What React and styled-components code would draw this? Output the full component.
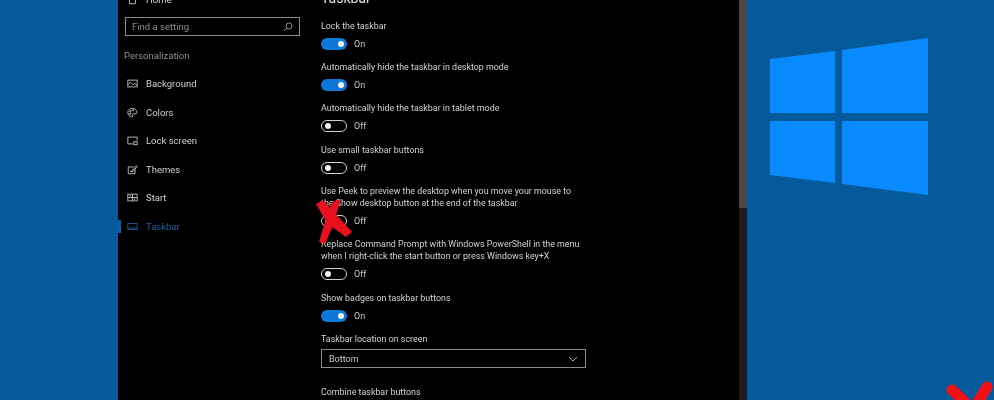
import styled, { createGlobalStyle } from "styled-components";
import { Fragment } from "react";

const GlobalStyle = createGlobalStyle`
  html, body {
    margin: 0;
    padding: 0;
    background: #045a9b;
    overflow: hidden;
  }
`;

const Desktop = styled.div`
  position: relative;
  display: flex;
  width: 994px;
  height: 400px;
  overflow: hidden;
  background: #045a9b;
  padding-left: 118px;
  box-sizing: border-box;
  font-family: Roboto, "Liberation Sans", sans-serif;
`;

const SettingsWindow = styled.div`
  display: flex;
  width: 629px;
  height: 400px;
  background: #000;
  overflow: hidden;
`;

const Sidebar = styled.nav`
  width: 203px;
  flex-shrink: 0;
  margin-top: -9px;
  filter: blur(0.35px);
`;

const HomeRow = styled.div`
  display: flex;
  align-items: center;
  gap: 8px;
  height: 17px;
  padding-left: 9px;
  font-size: 9.5px;
  color: #d8d8d8;
`;

const SearchBox = styled.div`
  display: flex;
  align-items: center;
  justify-content: space-between;
  box-sizing: border-box;
  width: 175px;
  height: 19px;
  margin: 9px 0 0 7px;
  padding: 0 6px;
  border: 1px solid #8a8a8a;
  font-size: 9.5px;
  color: #8c8c8c;
`;

const SectionTitle = styled.div`
  margin: 12px 0 0 6px;
  height: 15px;
  line-height: 15px;
  font-size: 9.5px;
  color: #8f8f8f;
`;

const NavList = styled.div`
  margin-top: 6.5px;
`;

const NavItem = styled.div`
  position: relative;
  display: flex;
  align-items: center;
  gap: 8px;
  height: 28.5px;
  padding-left: 9px;
  font-size: 9.5px;
  color: ${(p) => (p.$active ? "#1f5f9e" : "#cfcfcf")};
  &::before {
    content: "";
    display: ${(p) => (p.$active ? "block" : "none")};
    position: absolute;
    left: 0;
    top: 8px;
    width: 3px;
    height: 13px;
    background: #0a5fb0;
  }
`;

const NavIcon = styled.svg`
  width: 11px;
  height: 11px;
  flex-shrink: 0;
  fill: none;
  stroke: currentColor;
  stroke-width: 1;
`;

const Content = styled.main`
  flex: 1;
  margin-top: -11px;
  color: #d6d6d6;
  font-size: 8.9px;
  filter: blur(0.35px);
`;

const PageTitle = styled.h1`
  margin: 0;
  height: 30.5px;
  line-height: 18px;
  font-size: 14px;
  font-weight: 400;
  color: #e4e4e4;
`;

const Setting = styled.section`
  margin-bottom: ${(p) => p.$gap ?? 10.4}px;
`;

const Label = styled.div`
  line-height: 12px;
  font-size: 8.9px;
  color: #d2d2d2;
  white-space: nowrap;
`;

const ToggleRow = styled.div`
  display: flex;
  align-items: center;
  gap: 7px;
  height: 14px;
  margin-top: 5px;
  font-size: 9px;
  color: #c8c8c8;
`;

const Track = styled.span`
  display: flex;
  align-items: center;
  justify-content: ${(p) => (p.$on ? "flex-end" : "flex-start")};
  box-sizing: border-box;
  width: 26px;
  height: 12px;
  padding: 0 3px;
  border-radius: 6px;
  border: ${(p) => (p.$on ? "none" : "1.5px solid #d0d0d0")};
  background: ${(p) => (p.$on ? "#0d78d8" : "transparent")};
`;

const Knob = styled.span`
  width: 6px;
  height: 6px;
  border-radius: 50%;
  background: #f2f2f2;
`;

const Select = styled.div`
  display: flex;
  align-items: center;
  justify-content: space-between;
  box-sizing: border-box;
  width: 265px;
  height: 19px;
  margin-top: 4px;
  padding: 0 7px;
  border: 1px solid #8a8a8a;
  font-size: 9px;
  color: #cccccc;
`;

const ScrollTrack = styled.div`
  width: 8px;
  flex-shrink: 0;
  height: 400px;
  background: #1c1c1c;
`;

const ScrollThumb = styled.div`
  height: 208px;
  background: #4a4a48;
`;

const LogoArea = styled.div`
  flex: 1;
  display: flex;
  align-items: flex-start;
  padding: 38px 0 0 23px;
`;

const RedMark = styled.svg`
  position: absolute;
  left: 0;
  top: 0;
  pointer-events: none;
`;

const navItems = [
  {
    name: "Background",
    icon: (
      <>
        <rect x="1" y="2.500" width="11" height="8" />
        <path d="M1 8l3-3 3 3 2-1.500 3 2" />
      </>
    ),
  },
  {
    name: "Colors",
    icon: (
      <>
        <path d="M6.500 1.500a5 5 0 0 0-1 10c1.500.3 1.300-1.500 1-2.300-.3-1 .8-1.500 2-1.200 2 .5 3.500-.5 3-2.500-.5-2.500-2.500-4-5-4z" />
        <circle cx="4" cy="5" r=".8" />
        <circle cx="7" cy="3.800" r=".8" />
        <circle cx="3.800" cy="8" r=".8" />
      </>
    ),
  },
  {
    name: "Lock screen",
    icon: (
      <>
        <path d="M7 10.500H1v-8h11v4" />
        <rect x="8" y="8" width="4" height="3.500" />
      </>
    ),
  },
  {
    name: "Themes",
    icon: (
      <>
        <path d="M8 3.500H1.500v8h8V6" />
        <path d="M4 9l2-1 5-6 1 1-5 6z" />
      </>
    ),
  },
  {
    name: "Start",
    icon: (
      <>
        <rect x="1" y="2.500" width="11" height="8" />
        <path d="M1 6.500h11M6.500 2.500v8M3 4.500h2M8 8.500h2" />
      </>
    ),
  },
  {
    name: "Taskbar",
    active: true,
    icon: (
      <>
        <rect x="1" y="3" width="11" height="7" />
        <path d="M1 8.500h11" />
      </>
    ),
  },
];

function Toggle({ on }) {
  return (
    <ToggleRow>
      <Track $on={on}>
        <Knob />
      </Track>
      {on ? "On" : "Off"}
    </ToggleRow>
  );
}

const settings = [
  { label: ["Lock the taskbar"], on: true },
  { label: ["Automatically hide the taskbar in desktop mode"], on: true },
  { label: ["Automatically hide the taskbar in tablet mode"], on: false },
  { label: ["Use small taskbar buttons"], on: false },
  {
    label: [
      "Use Peek to preview the desktop when you move your mouse to",
      "the Show desktop button at the end of the taskbar",
    ],
    on: false,
  },
  {
    label: [
      "Replace Command Prompt with Windows PowerShell in the menu",
      "when I right-click the start button or press Windows key+X",
    ],
    on: false,
  },
  { label: ["Show badges on taskbar buttons"], on: true },
];

export default function App() {
  return (
    <>
      <GlobalStyle />
      <Desktop>
        <SettingsWindow>
          <Sidebar>
            <HomeRow>
              <NavIcon viewBox="0 0 13 13">
                <path d="M1 6.500l5.500-5 5.500 5M3 5.500v6h7v-6" />
              </NavIcon>
              Home
            </HomeRow>
            <SearchBox>
              Find a setting
              <svg width="10" height="10" viewBox="0 0 10 10" fill="none" stroke="#8c8c8c">
                <circle cx="6" cy="4" r="3" />
                <path d="M4 6L1 9" />
              </svg>
            </SearchBox>
            <SectionTitle>Personalization</SectionTitle>
            <NavList>
              {navItems.map((item) => (
                <NavItem key={item.name} $active={item.active}>
                  <NavIcon viewBox="0 0 13 13">{item.icon}</NavIcon>
                  {item.name}
                </NavItem>
              ))}
            </NavList>
          </Sidebar>
          <Content>
            <PageTitle>Taskbar</PageTitle>
            {settings.map((s) => (
              <Setting key={s.label[0]}>
                <Label>
                  {s.label.map((line) => (
                    <Fragment key={line}>
                      {line}
                      <br />
                    </Fragment>
                  ))}
                </Label>
                <Toggle on={s.on} />
              </Setting>
            ))}
            <Setting $gap={18}>
              <Label>Taskbar location on screen</Label>
              <Select>
                Bottom
                <svg width="10" height="6" viewBox="0 0 10 6" fill="none" stroke="#a8a8a8">
                  <path d="M1 1l4 4 4-4" />
                </svg>
              </Select>
            </Setting>
            <Label>Combine taskbar buttons</Label>
          </Content>
          <ScrollTrack>
            <ScrollThumb />
          </ScrollTrack>
        </SettingsWindow>
        <LogoArea>
          <svg width="158" height="158" viewBox="0 0 158 158" fill="#0a8aff">
            <path d="M0 21L65 13v62H0z" />
            <path d="M72 12L158 0v75H72z" />
            <path d="M0 83h65v62L0 137z" />
            <path d="M72 83h86v74L72 146z" />
          </svg>
        </LogoArea>
        <RedMark width="994" height="400" viewBox="0 0 994 400">
          <g fill="#e8101c">
            <path d="M316 204l7-4 29 32-6 5-19-14z" />
            <path d="M332 202l9-3-9 29-7 16-6-2 6-20z" />
          </g>
          <g stroke="#f01016" strokeWidth="11" strokeLinecap="round">
            <path d="M952 390l16 15" />
            <path d="M987 387l-11 18" />
          </g>
        </RedMark>
      </Desktop>
    </>
  );
}
